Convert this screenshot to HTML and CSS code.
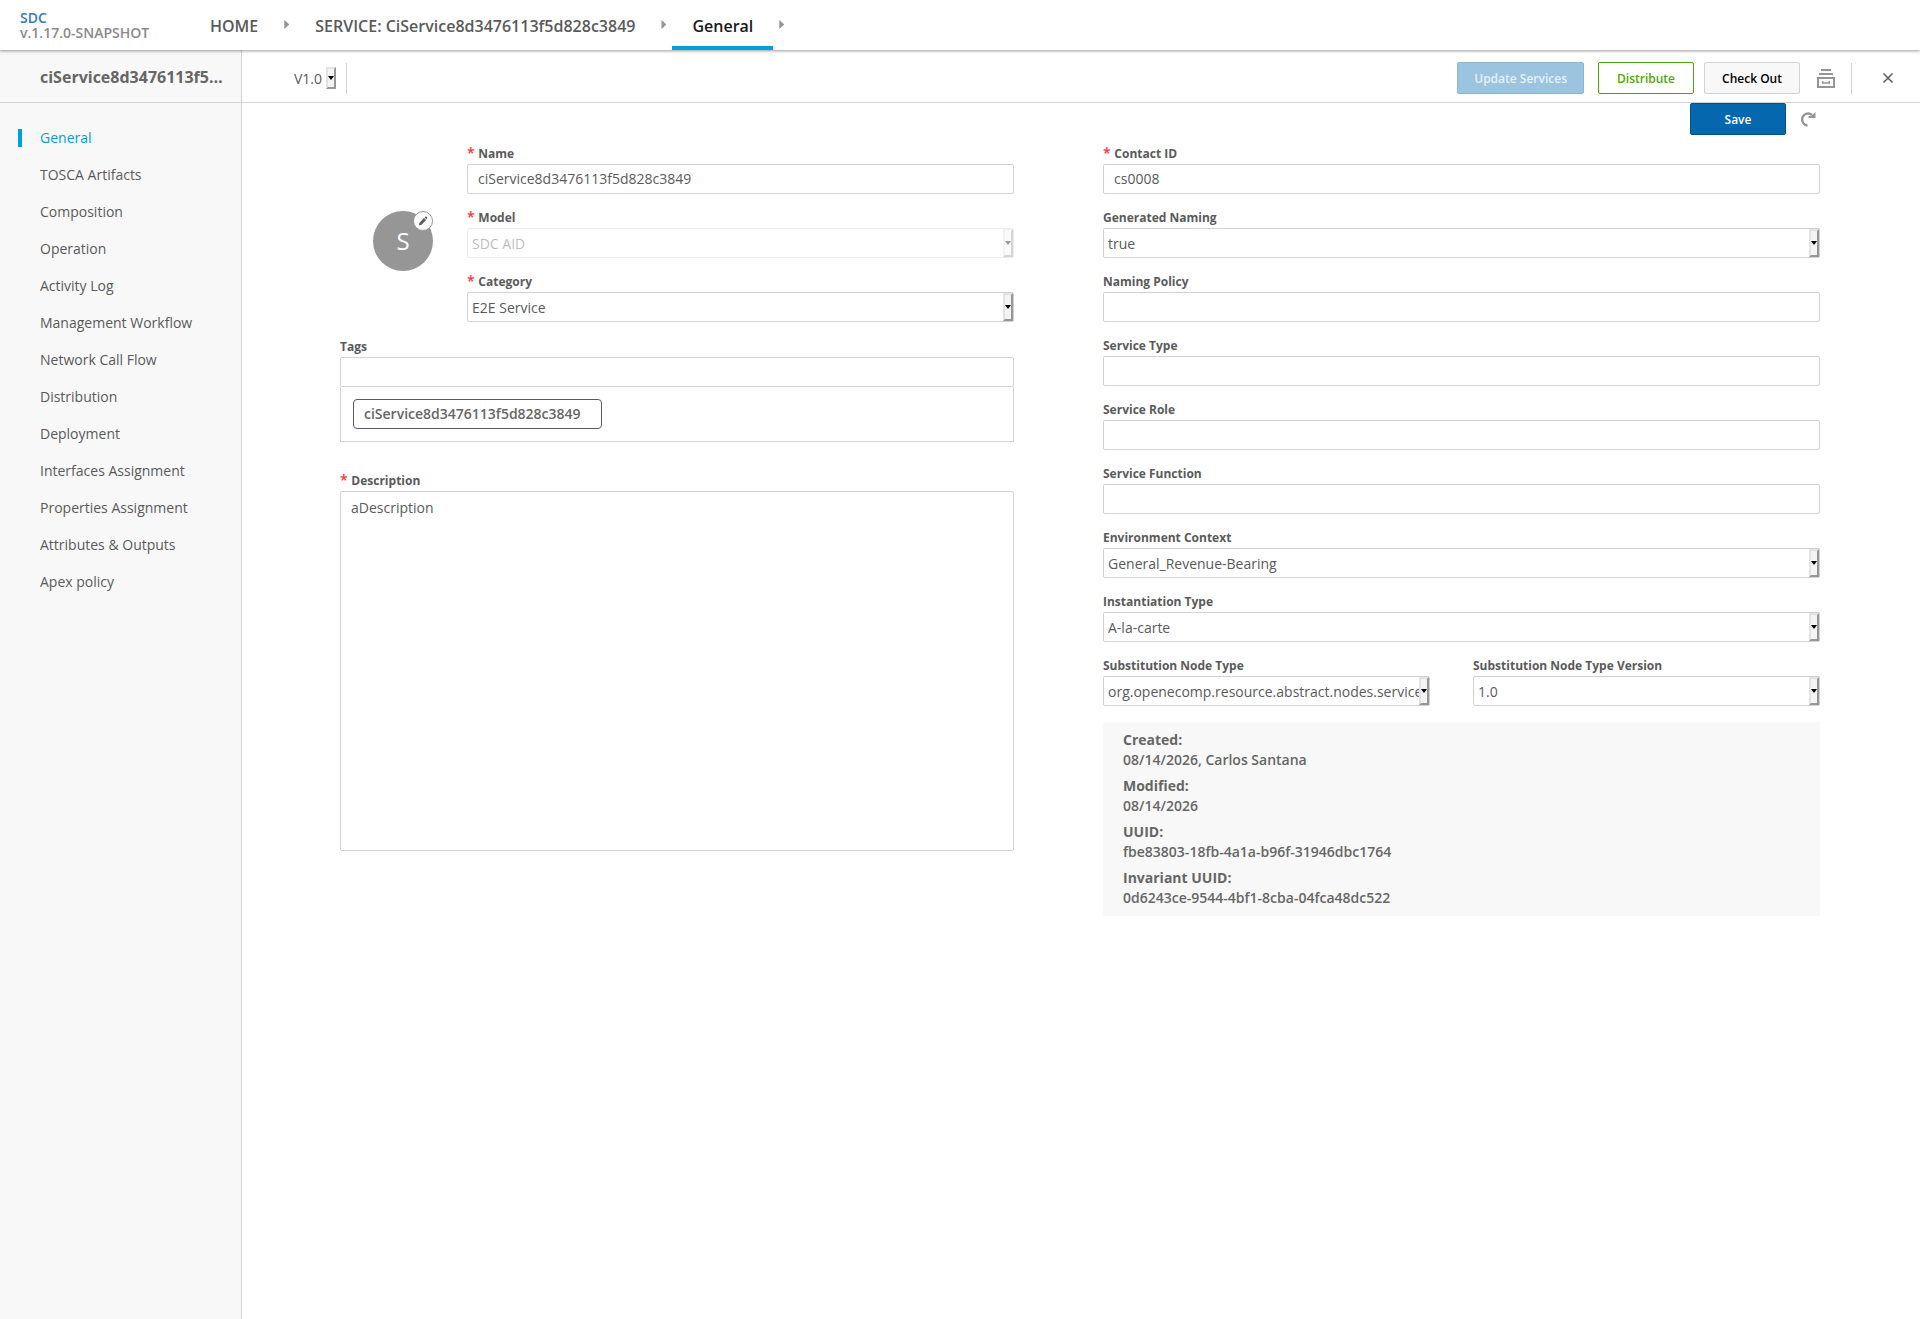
FILE: index.html
```html
<!DOCTYPE html>
<html lang="en">
<head>
    <meta charset="UTF-8">
    <meta name="viewport" content="width=device-width, initial-scale=1.0">
    <title>SDC - General</title>
    <link rel="stylesheet" href="styles.css">
</head>
<body>
    <header class="top-nav">
        <div class="logo">
            <a href="#">SDC</a>
            <span class="version">v.1.17.0-SNAPSHOT</span>
        </div>
        <nav class="breadcrumbs">
            <a href="#">HOME</a>
            <span class="arrow"></span>
            <a href="#">SERVICE: CiService8d3476113f5d828c3849</a>
            <span class="arrow"></span>
            <a href="#" class="selected">General</a>
            <span class="arrow"></span>
        </nav>
    </header>

    <div class="workspace">
        <aside class="sidebar">
            <div class="sidebar-title">ciService8d3476113f5d828c3849</div>
            <nav class="menu">
                <a href="#" class="selected">General</a>
                <a href="#">TOSCA Artifacts</a>
                <a href="#">Composition</a>
                <a href="#">Operation</a>
                <a href="#">Activity Log</a>
                <a href="#">Management Workflow</a>
                <a href="#">Network Call Flow</a>
                <a href="#">Distribution</a>
                <a href="#">Deployment</a>
                <a href="#">Interfaces Assignment</a>
                <a href="#">Properties Assignment</a>
                <a href="#">Attributes &amp; Outputs</a>
                <a href="#">Apex policy</a>
            </nav>
        </aside>

        <main class="content">
            <div class="toolbar">
                <div class="select version-select">
                    <select aria-label="Version"><option>V1.0</option></select>
                </div>
                <span class="divider"></span>
                <div class="actions">
                    <button class="btn update" disabled>Update Services</button>
                    <button class="btn green">Distribute</button>
                    <button class="btn grey">Check Out</button>
                    <button class="icon-btn archive" aria-label="Archive">
                        <svg width="18" height="19" viewBox="0 0 18 19" fill="none" stroke="#959595" stroke-width="2">
                            <path d="M4 1h10M2 5h14M1 9h16v9H1z"/>
                            <path d="M5.700 12v2h6.600v-2" stroke-width="1.500"/>
                        </svg>
                    </button>
                    <span class="divider"></span>
                    <button class="icon-btn close" aria-label="Close">
                        <svg width="10" height="10" viewBox="0 0 10 10" fill="none" stroke="#5a5a5a" stroke-width="1.500">
                            <path d="M.5.5l9 9M9.500.5l-9 9"/>
                        </svg>
                    </button>
                </div>
            </div>

            <form class="general-form">
                <div class="save-row">
                    <button type="button" class="btn blue">Save</button>
                    <button type="button" class="icon-btn" aria-label="Revert">
                        <svg width="16" height="16" viewBox="0 0 16 16" fill="none" stroke="#959595" stroke-width="2.400">
                            <path d="M7.500 14.500A6 6 0 1 1 12 4"/>
                            <path d="M15.500 1v6H8.500V5h2.800z" fill="#959595" stroke="none"/>
                        </svg>
                    </button>
                </div>

                <div class="columns">
                    <div class="left">
                        <div class="with-icon">
                            <div class="avatar">
                                S
                                <span class="edit">
                                    <svg width="10" height="10" viewBox="0 0 10 10" fill="#5a5a5a">
                                        <path d="M1 9.500l.4-2.600L6 2.100l2 1.800-4.500 4.900zM6.600 1.500L7.700.5c.5-.4 2 .9 1.600 1.500l-.9 1.200z"/>
                                    </svg>
                                </span>
                            </div>
                            <div class="fields">
                                <div class="field">
                                    <label class="required" for="name">Name</label>
                                    <input type="text" id="name" value="ciService8d3476113f5d828c3849">
                                </div>
                                <div class="field">
                                    <label class="required" for="model">Model</label>
                                    <div class="select disabled">
                                        <select id="model" disabled><option>SDC AID</option></select>
                                    </div>
                                </div>
                                <div class="field">
                                    <label class="required" for="category">Category</label>
                                    <div class="select">
                                        <select id="category"><option>E2E Service</option></select>
                                    </div>
                                </div>
                            </div>
                        </div>
                        <div class="tags-field">
                            <label for="tags">Tags</label>
                            <input type="text" id="tags">
                            <div class="tag-list">
                                <span class="tag">ciService8d3476113f5d828c3849</span>
                            </div>
                        </div>
                        <div class="description-field">
                            <label class="required" for="description">Description</label>
                            <textarea id="description">aDescription</textarea>
                        </div>
                    </div>

                    <div class="right">
                        <div class="field">
                            <label class="required" for="contact">Contact ID</label>
                            <input type="text" id="contact" value="cs0008">
                        </div>
                        <div class="field">
                            <label for="naming">Generated Naming</label>
                            <div class="select">
                                <select id="naming"><option>true</option></select>
                            </div>
                        </div>
                        <div class="field">
                            <label for="policy">Naming Policy</label>
                            <input type="text" id="policy">
                        </div>
                        <div class="field">
                            <label for="type">Service Type</label>
                            <input type="text" id="type">
                        </div>
                        <div class="field">
                            <label for="role">Service Role</label>
                            <input type="text" id="role">
                        </div>
                        <div class="field">
                            <label for="function">Service Function</label>
                            <input type="text" id="function">
                        </div>
                        <div class="field">
                            <label for="environment">Environment Context</label>
                            <div class="select">
                                <select id="environment"><option>General_Revenue-Bearing</option></select>
                            </div>
                        </div>
                        <div class="field">
                            <label for="instantiation">Instantiation Type</label>
                            <div class="select">
                                <select id="instantiation"><option>A-la-carte</option></select>
                            </div>
                        </div>
                        <div class="substitution">
                            <div class="field">
                                <label for="node-type">Substitution Node Type</label>
                                <div class="select">
                                    <select id="node-type"><option>org.openecomp.resource.abstract.nodes.service</option></select>
                                </div>
                            </div>
                            <div class="field">
                                <label for="node-version">Substitution Node Type Version</label>
                                <div class="select">
                                    <select id="node-version"><option>1.0</option></select>
                                </div>
                            </div>
                        </div>
                        <dl class="meta">
                            <dt>Created:</dt>
                            <dd>08/14/2026, Carlos Santana</dd>
                            <dt>Modified:</dt>
                            <dd>08/14/2026</dd>
                            <dt>UUID:</dt>
                            <dd>fbe83803-18fb-4a1a-b96f-31946dbc1764</dd>
                            <dt>Invariant UUID:</dt>
                            <dd>0d6243ce-9544-4bf1-8cba-04fca48dc522</dd>
                        </dl>
                    </div>
                </div>
            </form>
        </main>
    </div>
</body>
</html>
```
FILE: styles.css
```css
*, *::before, *::after {
    box-sizing: border-box;
}
body {
    margin: 0;
    min-height: 100vh;
    display: flex;
    flex-direction: column;
    font-family: "Open Sans", sans-serif;
    font-size: 14px;
    line-height: 20px;
    color: #5a5a5a;
    background: #fff;
}
a {
    color: inherit;
    text-decoration: none;
}
input, select, textarea, button {
    font-family: inherit;
    font-size: 14px;
    color: inherit;
}

/* header */
.top-nav {
    display: flex;
    height: 50px;
    position: relative;
    z-index: 1;
    background: #fff;
    box-shadow: 0 1px 3px rgba(0, 0, 0, 0.4);
}
.logo {
    width: 190px;
    padding: 10px 0 0 20px;
    font-weight: 600;
    line-height: 15px;
}
.logo a {
    display: block;
    color: #337ab7;
}
.version {
    color: #8a8a8a;
}
.breadcrumbs {
    display: flex;
    font-size: 16px;
    font-weight: 600;
    line-height: 52px;
}
.breadcrumbs a {
    height: 50px;
    padding: 0 20px;
}
.breadcrumbs .selected {
    color: #191919;
    border-bottom: 4px solid #009fdb;
}
.arrow {
    width: 5px;
    height: 9px;
    margin: 20px 6px 0;
    background: #959595;
    clip-path: polygon(0 0, 100% 50%, 0 100%);
}

/* sidebar */
.workspace {
    flex: 1;
    display: flex;
}
.sidebar {
    width: 242px;
    background: #f8f8f8;
    border-right: 1px solid #d2d2d2;
}
.sidebar-title {
    height: 53px;
    padding: 0 15px 0 40px;
    border-bottom: 1px solid #d2d2d2;
    color: #666;
    font-size: 16px;
    font-weight: 700;
    line-height: 54px;
    overflow: hidden;
    text-overflow: ellipsis;
    white-space: nowrap;
}
.menu {
    display: flex;
    flex-direction: column;
    padding-top: 26px;
}
.menu a {
    margin-bottom: 19px;
    padding-left: 18px;
    margin-left: 18px;
    border-left: 4px solid transparent;
    line-height: 18px;
}
.menu .selected {
    color: #009fdb;
    border-left-color: #009fdb;
}

/* toolbar */
.content {
    flex: 1;
    min-width: 0;
}
.toolbar {
    display: flex;
    align-items: center;
    height: 53px;
    padding: 4px 27px 0 48px;
    border-bottom: 1px solid #d2d2d2;
}
.divider {
    width: 1px;
    height: 31px;
    background: #d2d2d2;
}
.actions {
    display: flex;
    align-items: center;
    margin-left: auto;
}
.btn {
    min-width: 96px;
    height: 32px;
    padding: 0 16px;
    border: 1px solid;
    border-radius: 2px;
    font-size: 12px;
    font-weight: 600;
}
.update {
    margin-right: 14px;
    color: #e6f1f8;
    background: #9bc4e0;
    border-color: #8db5d1;
}
.green {
    margin-right: 10px;
    color: #4ca90c;
    background: #fff;
    border-color: #4ca90c;
}
.grey {
    color: #000;
    background: #f8f8f8;
    border-color: #d2d2d2;
}
.blue {
    color: #fff;
    background: #0568ae;
    border-color: #00528c;
}
.icon-btn {
    display: flex;
    padding: 0;
    border: 0;
    background: none;
}
.archive {
    margin: 0 16px 0 17px;
}
.close {
    margin-left: 31px;
}

/* form */
.general-form {
    padding: 0 100px 0 98px;
}
.save-row {
    display: flex;
    align-items: center;
    justify-content: flex-end;
    gap: 14px;
    padding-right: 4px;
}
.columns {
    display: grid;
    grid-template-columns: 674fr 717fr;
    gap: 89px;
    margin-top: 9px;
}
.with-icon {
    display: flex;
}
.fields {
    flex: 1;
}
.field {
    height: 64px;
}
label {
    display: block;
    height: 20px;
    font-size: 12px;
    font-weight: 700;
}
.required::before {
    content: "* ";
    color: #f33;
    font-size: 14px;
    font-weight: 600;
    line-height: 1;
}
input, select, textarea {
    display: block;
    width: 100%;
    height: 30px;
    padding: 0 10px;
    border: 1px solid #d2d2d2;
    border-radius: 2px;
    background: #fff;
}
input {
    padding-bottom: 1px;
}
select {
    appearance: none;
    padding: 0 10px 0 4px;
}
.select {
    position: relative;
}
.select::before {
    content: "";
    position: absolute;
    top: 1px;
    right: 1px;
    bottom: 1px;
    width: 10px;
    border: 2px solid;
    border-color: #e3e3e3 #969696 #969696 #e3e3e3;
    background: #f3f3f3;
    pointer-events: none;
}
.select::after {
    content: "";
    position: absolute;
    top: 13px;
    right: 3px;
    border: 3px solid transparent;
    border-top: 4px solid #000;
    border-bottom: 0;
    pointer-events: none;
}
.disabled {
    opacity: 0.4;
}
select:disabled {
    opacity: 1;
}
.version-select {
    width: 47px;
    margin-right: 9px;
}
.version-select select {
    height: 24px;
    padding: 0 10px 0 4px;
    border: 0;
}
.version-select::after {
    top: 10px;
}
.avatar {
    position: relative;
    width: 60px;
    height: 60px;
    margin: 67px 34px 0 33px;
    border-radius: 50%;
    background: #969696;
    color: #fff;
    font-size: 24px;
    line-height: 60px;
    text-align: center;
}
.edit {
    position: absolute;
    top: 0;
    right: 0;
    display: flex;
    align-items: center;
    justify-content: center;
    width: 20px;
    height: 20px;
    border: 1px solid #969696;
    border-radius: 50%;
    background: #fff;
}
.tags-field {
    margin-top: 1px;
}
.tag-list {
    padding: 12px;
    border: 1px solid #d2d2d2;
    border-top: 0;
}
.tag {
    display: inline-block;
    height: 30px;
    padding: 0 20px 0 10px;
    border: 1px solid #5a5a5a;
    border-radius: 4px;
    color: #666;
    font-weight: 600;
    line-height: 28px;
    vertical-align: top;
}
.description-field {
    margin-top: 29px;
}
textarea {
    height: 360px;
    padding: 6px 10px;
    resize: none;
}
.substitution {
    display: grid;
    grid-template-columns: 327fr 347fr;
    gap: 43px;
}
.meta {
    margin: 2px 0 0;
    padding: 8px 20px;
    background: #f8f8f8;
    color: #666;
}
.meta dt {
    font-weight: 700;
}
.meta dd {
    margin: 0 0 6px;
    font-weight: 600;
}
.meta dd:last-child {
    margin: 0;
}
```
